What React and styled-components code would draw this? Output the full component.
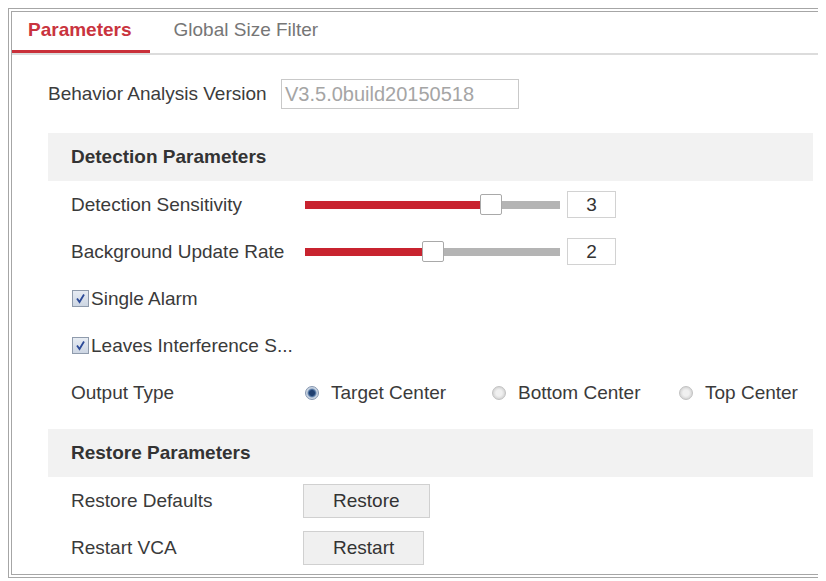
import React from "react";
import styled, { createGlobalStyle } from "styled-components";

const GlobalStyle = createGlobalStyle`
  html, body { background: #ffffff; }
  body {
    margin: 8px;
    font-family: "Liberation Sans", Arial, sans-serif;
    color: #333333;
  }
  * { box-sizing: border-box; }
`;

const Frame = styled.div`
  width: 814px;
  height: 570px;
  border: 4px double #a6a6a6;
  background: #ffffff;
  overflow: hidden;
`;

const TabBar = styled.div`
  display: flex;
  gap: 8px;
  height: 43px;
  border-bottom: 2px solid #dcdcdc;
`;

const Tab = styled.div`
  display: flex;
  align-items: center;
  height: 41px;
  padding: 0 18px 3px 16px;
  font-size: 19px;
  font-weight: ${(p) => (p.$active ? "bold" : "normal")};
  color: ${(p) => (p.$active ? "#c9343e" : "#767676")};
  border-bottom: 3px solid ${(p) => (p.$active ? "#c9303a" : "transparent")};
`;

const Content = styled.div`
  padding: 24px 5px 0 36px;
`;

const VersionRow = styled.div`
  display: flex;
  align-items: center;
  height: 30px;
`;

const VersionLabel = styled.div`
  width: 233px;
  font-size: 19px;
  color: #3c3c3c;
`;

const VersionInput = styled.div`
  width: 238px;
  height: 30px;
  border: 1px solid #c9c9c9;
  padding-left: 3px;
  display: flex;
  align-items: center;
  font-size: 20px;
  color: #a5a5a5;
`;

const Section = styled.div`
  margin-top: ${(p) => p.$top}px;
`;

const SectionHeader = styled.div`
  height: 48px;
  background: #f2f2f2;
  padding-left: 23px;
  display: flex;
  align-items: center;
  font-size: 19px;
  font-weight: bold;
  color: #333333;
`;

const Row = styled.div`
  height: 47px;
  display: flex;
  align-items: center;
  padding-left: 23px;
  font-size: 19px;
  color: #3a3a3a;
`;

const RowLabel = styled.div`
  width: 234px;
  flex-shrink: 0;
`;

const SliderBox = styled.div`
  position: relative;
  width: 255px;
  height: 22px;
  display: flex;
  align-items: center;
`;

const Track = styled.div`
  width: 100%;
  height: 8px;
  background: #b4b4b4;
  display: flex;
`;

const Fill = styled.div`
  height: 100%;
  background: #c8232f;
`;

const Thumb = styled.div`
  position: absolute;
  top: 0;
  width: 22px;
  height: 21px;
  background: #ffffff;
  border: 1px solid #a9a9a9;
  border-radius: 2px;
`;

const ValueBox = styled.div`
  margin-left: 7px;
  width: 49px;
  height: 27px;
  border: 1px solid #d2d2d2;
  display: flex;
  align-items: center;
  justify-content: center;
  font-size: 19px;
  color: #333333;
`;

const CheckBox = styled.span`
  width: 17px;
  height: 17px;
  margin-left: 1px;
  margin-right: 2px;
  border: 1px solid #8f9bac;
  background: linear-gradient(#e7ecf3, #cdd6e3);
  display: inline-flex;
  align-items: center;
  justify-content: center;
`;

const RadioGroup = styled.div`
  display: flex;
`;

const RadioOption = styled.div`
  width: 187px;
  display: flex;
  align-items: center;
  gap: 12px;
  &:last-child { width: auto; }
`;

const RadioDot = styled.span`
  width: 14px;
  height: 14px;
  border-radius: 50%;
  border: 1px solid ${(p) => (p.$checked ? "#8596b0" : "#c2c2c2")};
  background: ${(p) =>
    p.$checked
      ? "radial-gradient(circle, #1f3f70 0 2.5px, #4b6f9e 3.5px, #c9d4e2 5px)"
      : "radial-gradient(circle, #f0f0f0 0 3px, #d6d6d6 6px)"};
  flex-shrink: 0;
`;

const Button = styled.div`
  height: 34px;
  margin-left: -2px;
  padding: 0 29px;
  display: inline-flex;
  align-items: center;
  justify-content: center;
  background: #f0f0f0;
  border: 1px solid #d0d0d0;
  font-size: 19px;
  color: #333333;
`;

function Slider({ value, max }) {
  const ratio = value / max;
  const left = ratio * (255 - 22);
  return (
    <SliderBox>
      <Track>
        <Fill style={{ width: left + 11 }} />
      </Track>
      <Thumb style={{ left }} />
    </SliderBox>
  );
}

function Check() {
  return (
    <CheckBox>
      <svg width="11" height="11" viewBox="0 0 11 11">
        <path d="M2 5.5 L4.5 9 L9 1.5" fill="none" stroke="#2c4a98" strokeWidth="1.8" />
      </svg>
    </CheckBox>
  );
}

export default function App() {
  return (
    <>
      <GlobalStyle />
      <Frame>
        <TabBar>
          <Tab $active>Parameters</Tab>
          <Tab>Global Size Filter</Tab>
        </TabBar>
        <Content>
          <VersionRow>
            <VersionLabel>Behavior Analysis Version</VersionLabel>
            <VersionInput>V3.5.0build20150518</VersionInput>
          </VersionRow>
          <Section $top={24}>
            <SectionHeader>Detection Parameters</SectionHeader>
            <Row>
              <RowLabel>Detection Sensitivity</RowLabel>
              <Slider value={3} max={4} />
              <ValueBox>3</ValueBox>
            </Row>
            <Row>
              <RowLabel>Background Update Rate</RowLabel>
              <Slider value={2} max={4} />
              <ValueBox>2</ValueBox>
            </Row>
            <Row>
              <Check />
              Single Alarm
            </Row>
            <Row>
              <Check />
              Leaves Interference S...
            </Row>
            <Row>
              <RowLabel>Output Type</RowLabel>
              <RadioGroup>
                <RadioOption>
                  <RadioDot $checked />
                  Target Center
                </RadioOption>
                <RadioOption>
                  <RadioDot />
                  Bottom Center
                </RadioOption>
                <RadioOption>
                  <RadioDot />
                  Top Center
                </RadioOption>
              </RadioGroup>
            </Row>
          </Section>
          <Section $top={13}>
            <SectionHeader>Restore Parameters</SectionHeader>
            <Row>
              <RowLabel>Restore Defaults</RowLabel>
              <Button>Restore</Button>
            </Row>
            <Row>
              <RowLabel>Restart VCA</RowLabel>
              <Button>Restart</Button>
            </Row>
          </Section>
        </Content>
      </Frame>
    </>
  );
}
